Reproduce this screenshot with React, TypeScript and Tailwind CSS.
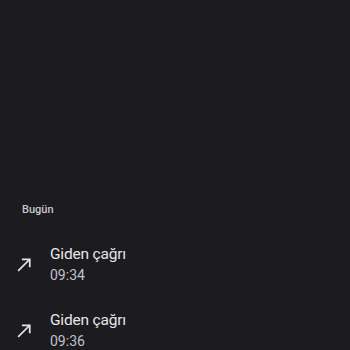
const calls = [
  { id: 1, label: "Giden çağrı", time: "09:34" },
  { id: 2, label: "Giden çağrı", time: "09:36" },
];

function OutgoingIcon() {
  return (
    <svg className="w-[21px] h-[21px]" viewBox="0 0 24 24" fill="currentColor">
      <path d="M9 5v2h6.59L4 18.59 5.41 20 17 8.41V15h2V5z" />
    </svg>
  );
}

export default function App() {
  return (
    <div className="h-[350px] w-[350px] overflow-hidden bg-[#1c1b1f] font-['Roboto',sans-serif]">
      <div className="pt-[202px] pl-[22px] text-[11px] leading-[16px] font-medium text-[#c9c8cd]">
        Bugün
      </div>
      <div className="mt-[24px] flex flex-col gap-[22px]">
        {calls.map((call) => (
          <div key={call.id} className="flex items-center h-[44px]">
            <div className="w-[50px] pl-[14px] pt-[0px] text-[#e3e2e6]">
              <OutgoingIcon />
            </div>
            <div className="flex flex-col">
              <span className="text-[15.5px] leading-[22px] tracking-[-0.2px] text-[#e6e5ea]">{call.label}</span>
              <span className="text-[14px] leading-[20px] text-[#c2c1c6]">{call.time}</span>
            </div>
          </div>
        ))}
      </div>
    </div>
  );
}
